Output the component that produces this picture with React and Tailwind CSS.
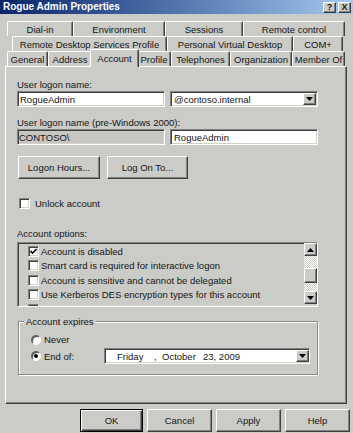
import React from "react";

const raised =
  "border border-t-white border-l-white border-b-[#404040] border-r-[#404040] shadow-[inset_-1px_-1px_0_#808080] bg-[#cbccc8]";
const sunken =
  "border border-t-[#808080] border-l-[#808080] border-b-white border-r-white shadow-[inset_1px_1px_0_#404040,inset_-1px_-1px_0_#d4d0c8]";

function Tri({ up }) {
  return (
    <svg width="7" height="4" viewBox="0 0 7 4">
      {up ? <polygon points="0,4 7,4 3.5,0" fill="#000" /> : <polygon points="0,0 7,0 3.5,4" fill="#000" />}
    </svg>
  );
}

function DropBtn() {
  return (
    <div className={`w-[13px] h-[12px] ${raised} flex items-center justify-center shrink-0`}>
      <Tri />
    </div>
  );
}

function Tab({ w, children, selected }) {
  if (selected) {
    return (
      <div
        style={{ width: w }}
        className="relative z-10 -mx-[2px] -mb-[1px] h-[18px] bg-[#cbccc8] border-t border-l border-r border-t-white border-l-white border-r-[#404040] rounded-t-[2px] shadow-[inset_-1px_0_0_#808080] flex items-start justify-center pt-[2px] shrink-0"
      >
        {children}
      </div>
    );
  }
  return (
    <div
      style={{ width: w }}
      className="h-[15px] border-t border-l border-r border-t-white border-l-white border-r-[#404040] rounded-t-[2px] shadow-[inset_-1px_0_0_#808080] flex items-center justify-center shrink-0 whitespace-nowrap"
    >
      {children}
    </div>
  );
}

function Check({ checked }) {
  return (
    <div className={`w-[11px] h-[11px] bg-white ${sunken} flex items-center justify-center shrink-0`}>
      {checked && (
        <svg width="7" height="7" viewBox="0 0 7 7">
          <polyline points="0.5,3 2.5,5.2 6.5,1" fill="none" stroke="#000" strokeWidth="1.6" />
        </svg>
      )}
    </div>
  );
}

function Radio({ checked }) {
  return (
    <div className="w-[10px] h-[10px] rounded-full bg-white border border-t-[#606060] border-l-[#606060] border-b-white border-r-white shadow-[inset_1px_1px_0_#404040] flex items-center justify-center shrink-0">
      {checked && <div className="w-[4px] h-[4px] rounded-full bg-black" />}
    </div>
  );
}

function Button({ w, children, def }) {
  return (
    <div
      style={{ width: w }}
      className={
        def
          ? "h-[23px] bg-[#cbccc8] border border-black shadow-[inset_1px_1px_0_white,inset_-1px_-1px_0_#404040,inset_-2px_-2px_0_#808080] flex items-center justify-center"
          : `h-[23px] ${raised} flex items-center justify-center`
      }
    >
      {children}
    </div>
  );
}

export default function App() {
  const items = [
    ["Account is disabled", true],
    ["Smart card is required for interactive logon", false],
    ["Account is sensitive and cannot be delegated", false],
    ["Use Kerberos DES encryption types for this account", false],
  ];
  return (
    <div className="w-[353px] h-[433px] overflow-hidden bg-[#cbccc8] text-[#141414] text-[9.5px] leading-[13px] font-['Liberation_Sans',Arial,sans-serif]">
      {/* Title bar */}
      <div className="h-[14px] bg-linear-to-r from-[#0a246a] to-[#a6caf0] flex items-center justify-between pl-[3px] pr-[2px]">
        <span className="text-white font-bold text-[10px] leading-[14px]">Rogue Admin Properties</span>
        <div className="flex gap-[2px]">
          <div className={`w-[13px] h-[11px] ${raised} flex items-center justify-center text-[9px] font-bold leading-none`}>?</div>
          <div className={`w-[13px] h-[11px] ${raised} flex items-center justify-center text-[9px] font-bold leading-none`}>X</div>
        </div>
      </div>

      {/* Tabs */}
      <div className="mt-[7px] flex flex-col">
        <div className="flex pl-[7px]">
          <Tab w={66}>Dial-in</Tab>
          <Tab w={92}>Environment</Tab>
          <Tab w={78}>Sessions</Tab>
          <Tab w={102}>Remote control</Tab>
        </div>
        <div className="flex pl-[12px]">
          <Tab w={155}>Remote Desktop Services Profile</Tab>
          <Tab w={126}>Personal Virtual Desktop</Tab>
          <Tab w={50}>COM+</Tab>
        </div>
        <div className="flex items-end h-[15px] pl-[7px]">
          <Tab w={41}>General</Tab>
          <Tab w={44}>Address</Tab>
          <Tab w={49} selected>Account</Tab>
          <Tab w={34}>Profile</Tab>
          <Tab w={59}>Telephones</Tab>
          <Tab w={62}>Organization</Tab>
          <Tab w={53}>Member Of</Tab>
        </div>
      </div>

      {/* Panel */}
      <div className="ml-[5px] w-[342px] h-[338px] border border-t-white border-l-white border-b-[#404040] border-r-[#404040] shadow-[inset_-1px_-1px_0_#808080] pl-[11px] pt-[11px] flex flex-col">
        <div className="h-[13px]">User logon name:</div>
        <div className="flex gap-[5px] h-[16px]">
          <div className={`w-[148px] h-[16px] bg-white ${sunken} flex items-center pl-[2px]`}>RogueAdmin</div>
          <div className={`w-[148px] h-[16px] bg-white ${sunken} flex items-center pl-[3px] pr-[1px]`}>
            <span className="flex-1">@contoso.internal</span>
            <DropBtn />
          </div>
        </div>
        <div className="h-[13px] mt-[9px]">User logon name (pre-Windows 2000):</div>
        <div className="flex gap-[5px] h-[16px]">
          <div className={`w-[148px] h-[16px] bg-[#c6c7c3] ${sunken} flex items-center pl-[1px]`}>CONTOSO\</div>
          <div className={`w-[148px] h-[16px] bg-white ${sunken} flex items-center pl-[3px]`}>RogueAdmin</div>
        </div>
        <div className="flex gap-[7px] mt-[11px] ml-[1px]">
          <Button w={82}>Logon Hours...</Button>
          <Button w={81}>Log On To...</Button>
        </div>
        <div className="flex items-center h-[13px] mt-[18px] ml-[2px] gap-[5px]">
          <Check />
          <span>Unlock account</span>
        </div>
        <div className="h-[13px] mt-[17px]">Account options:</div>
        <div className={`mt-[2px] w-[301px] h-[65px] ${sunken} flex`}>
          <div className="flex-1 overflow-hidden pl-[10px] pt-[1px]">
            {items.map(([t, c]) => (
              <div key={t} className="h-[14.5px] flex items-center gap-[2px] whitespace-nowrap">
                <Check checked={c} />
                <span>{t}</span>
              </div>
            ))}
            <div className="h-[14.5px] flex items-start pt-[2px]">
              <Check />
            </div>
          </div>
          <div className="w-[13px] flex flex-col">
            <div className={`h-[13px] ${raised} flex items-center justify-center`}>
              <Tri up />
            </div>
            <div className="h-[12px] bg-[repeating-conic-gradient(#ffffff_0_25%,#cbccc8_0_50%)] bg-size-[2px_2px]" />
            <div className={`h-[15px] ${raised}`} />
            <div className="h-[8px] bg-[repeating-conic-gradient(#ffffff_0_25%,#cbccc8_0_50%)] bg-size-[2px_2px]" />
            <div className={`h-[13px] ${raised} flex items-center justify-center`}>
              <Tri />
            </div>
          </div>
        </div>

        {/* Group box */}
        <div className="relative mt-[14px] ml-[1px] w-[300px] h-[54px] border border-[#8a8b87] shadow-[inset_1px_1px_0_#fff,1px_1px_0_#fff] pl-[12px] pt-[11px] flex flex-col gap-[2px]">
          <span className="absolute left-[5px] -top-[7px] px-[2px] bg-[#cbccc8] leading-[13px]">Account expires</span>
          <div className="flex items-center h-[13px] gap-[3px]">
            <Radio />
            <span>Never</span>
          </div>
          <div className="flex items-center h-[16px] gap-[3px]">
            <Radio checked />
            <span className="w-[57px]">End of:</span>
            <div className={`w-[206px] h-[16px] bg-white ${sunken} flex items-center pl-[12px]`}>
              <span className="w-[37px]">Friday</span>
              <span className="w-[8px]">,</span>
              <span className="w-[41px]">October</span>
              <span className="flex-1">23, 2009</span>
              <DropBtn />
            </div>
          </div>
        </div>
      </div>

      {/* Bottom buttons */}
      <div className="mt-[5px] flex justify-end gap-[4px] pr-[3px]">
        <Button w={63} def>OK</Button>
        <Button w={65}>Cancel</Button>
        <Button w={65}>Apply</Button>
        <Button w={65}>Help</Button>
      </div>
    </div>
  );
}
